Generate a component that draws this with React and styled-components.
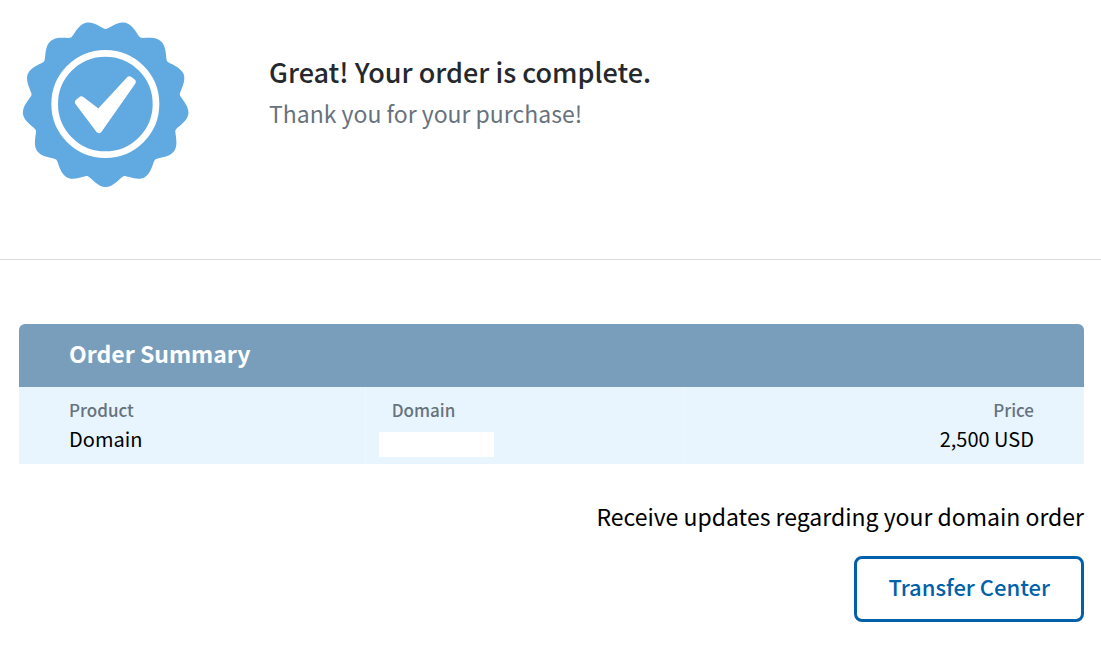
import React from "react";
import styled, { createGlobalStyle } from "styled-components";

// rounded seal with 13 scallops
const sealPath = (cx, cy, tip, valley, lobes) => {
  const step = Math.PI / lobes;
  const at = (angle, radius, shift = 0) => {
    const x = cx + radius * Math.sin(angle) + shift * Math.cos(angle);
    const y = cy + radius * Math.cos(angle) - shift * Math.sin(angle);
    return `${x.toFixed(1)} ${y.toFixed(1)}`;
  };
  let d = `M${at(0, tip)}`;
  for (let i = 0; i < lobes; i++) {
    const a = i * 2 * step;
    d += `C${at(a, tip, 25)} ${at(a + step, valley, -9)} ${at(a + step, valley)}`;
    d += `C${at(a + step, valley, 9)} ${at(a + 2 * step, tip, -25)} ${at(a + 2 * step, tip)}`;
  }
  return d + "Z";
};

const App = () => {
  return (
    <>
      <GlobalStyle />
      <Header>
        <Badge viewBox="36 30 504 504" aria-hidden="true">
          <path d={sealPath(287, 281, 250, 224, 13)} fill="#61a9e1" />
          <circle
            cx="286"
            cy="282"
            r="152"
            fill="none"
            stroke="#fff"
            strokeWidth="20"
          />
          <path
            d="M214 269L266 309L358 209L367 216L267 359L205 277Z"
            fill="#fff"
            stroke="#fff"
            strokeWidth="20"
            strokeLinejoin="round"
          />
        </Badge>
        <div>
          <Title>Great! Your order is complete.</Title>
          <Subtitle>Thank you for your purchase!</Subtitle>
        </div>
      </Header>
      <Main>
        <SummaryTitle id="summary">Order Summary</SummaryTitle>
        <Table aria-labelledby="summary">
          <thead>
            <tr>
              <Th $width="32.5%">Product</Th>
              <Th $width="30%">Domain</Th>
              <Th $right>Price</Th>
            </tr>
          </thead>
          <tbody>
            <tr>
              <Td>Domain</Td>
              <Td>
                <Redacted />
              </Td>
              <Td $right>2,500 USD</Td>
            </tr>
          </tbody>
        </Table>
        <Footer>
          <Note>Receive updates regarding your domain order</Note>
          <Button type="button">Transfer Center</Button>
        </Footer>
      </Main>
    </>
  );
};

export default App;

const GlobalStyle = createGlobalStyle`
  * {
    box-sizing: border-box;
  }

  body {
    margin: 0;
    background: #fff;
    color: #000;
    font-family: "Noto Sans CJK SC", "Open Sans", sans-serif;
  }
`;

const Header = styled.header`
  display: flex;
  align-items: flex-start;
  gap: 79px;
  padding: 20px 22px 71px;
  border-bottom: 1px solid #dadada;
`;

const Badge = styled.svg`
  flex: none;
  width: 168px;
  height: 168px;
`;

const Title = styled.h1`
  margin: 31px 0 0;
  color: #25292e;
  font-size: 27px;
  font-weight: 500;
  line-height: 42px;
`;

const Subtitle = styled.p`
  margin: 0;
  color: #67727c;
  font-size: 23px;
  line-height: 40px;
`;

const Main = styled.main`
  padding: 64px 17px 42px 19px;
`;

const SummaryTitle = styled.h2`
  margin: 0;
  padding: 0 50px 4px;
  border-radius: 6px 6px 0 0;
  background: #789ebc;
  color: #fff;
  font-size: 23px;
  font-weight: 700;
  line-height: 59px;
`;

const Table = styled.table`
  width: 100%;
  table-layout: fixed;
  border-collapse: collapse;
  background: #e8f5ff;
`;

const Th = styled.th`
  width: ${(props) => props.$width || "auto"};
  padding: 9px 26px 0;
  border-right: 1px solid #ecf7ff;
  color: #67727c;
  font-size: 17px;
  font-weight: 500;
  line-height: 28px;
  text-align: ${(props) => (props.$right ? "right" : "left")};

  &:first-child {
    padding-left: 50px;
  }

  &:last-child {
    padding-right: 50px;
    border-right: 0;
  }
`;

const Td = styled.td`
  padding: 0 26px 10px;
  border-right: 1px solid #ecf7ff;
  font-size: 20px;
  line-height: 30px;
  text-align: ${(props) => (props.$right ? "right" : "left")};

  &:first-child {
    padding-left: 50px;
  }

  &:nth-child(2) {
    padding-left: 13px;
    vertical-align: bottom;
    padding-bottom: 7px;
  }

  &:last-child {
    padding-right: 50px;
    border-right: 0;
  }
`;

const Redacted = styled.div`
  width: 115px;
  height: 25px;
  background: #fff;
`;

const Footer = styled.footer`
  display: flex;
  flex-direction: column;
  align-items: flex-end;
  gap: 20px;
  padding-top: 32px;
`;

const Note = styled.p`
  margin: 0;
  font-size: 23px;
  line-height: 40px;
`;

const Button = styled.button`
  height: 66px;
  padding: 0 31px 7px;
  border: 3px solid #0061aa;
  border-radius: 8px;
  background: #fff;
  color: #0061aa;
  font-family: inherit;
  font-size: 22px;
  font-weight: 500;
  cursor: pointer;
`;
